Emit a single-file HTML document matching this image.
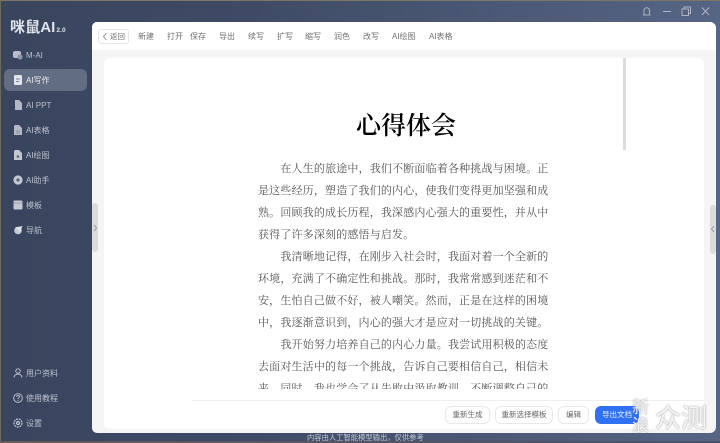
<!DOCTYPE html>
<html lang="zh"><head><meta charset="utf-8"><title>咪鼠AI</title>
<style>
*{margin:0;padding:0;box-sizing:border-box}
html,body{width:720px;height:443px;overflow:hidden;background:#3e4963}
body{position:relative;font-family:"Liberation Sans","Noto Sans CJK SC",sans-serif}
#all{position:absolute;left:0;top:0;width:720px;height:443px;filter:blur(.35px)}
.a{position:absolute;white-space:nowrap}
#bg{left:0;top:0;width:720px;height:443px;background:linear-gradient(90deg,#39445d 0%,#3f4b66 35%,#566584 100%);border-top:1px solid #7d7566;border-left:1px solid #6e675e}
#bot{left:0;top:441px;width:720px;height:2px;background:linear-gradient(90deg,#6b5a55,#5a5560 40%,#4a5268)}
#logo{left:10px;top:18px;font-size:15px;font-weight:bold;color:#dfe3ea;letter-spacing:.1px;line-height:20px}
#logo small{font-size:6.5px;margin-left:1px}
.nav{left:26px;font-size:8px;line-height:12px;color:#bcc2ce}
.ic{position:absolute;left:13px;width:10px;height:10px}
#pill{left:4px;top:69px;width:83px;height:22px;border-radius:6px;background:#626d83}
#panel{left:92px;top:22px;width:624px;height:411px;background:#f5f5f5;border-radius:5px 6px 6px 5px;overflow:hidden}
#tool{left:92px;top:22px;width:624px;height:28px;background:#fff;border-radius:5px 6px 0 0}
.t{top:31px;font-size:8px;line-height:12px;color:#707070}
#back{left:98px;top:29px;width:31px;height:15px;border:1px solid #e4e6ea;border-radius:3px;font-size:7.5px;line-height:14px;color:#707070;padding-left:11px}
#doc{left:104px;top:58px;width:600px;height:371px;background:#fff;border-radius:6px}
#sb{left:623px;top:58px;width:3px;height:92px;background:#dcdcdc}
#title{left:356px;top:108px;font-family:"Noto Serif CJK SC",serif;font-size:25px;line-height:32px;color:#000;font-weight:600}
#clip{left:258px;top:157px;width:300px;height:232px;overflow:hidden;font-family:"Noto Serif CJK SC",serif;font-size:11px;line-height:22px;color:#555;letter-spacing:.17px}
#clip div{white-space:nowrap}
.in{padding-left:22.4px}
#line{left:192px;top:400px;width:512px;height:1px;background:#eeeeee}
.b{top:406px;height:18px;border:1px solid #e9e9ec;border-radius:6px;background:#fff;font-size:7.5px;line-height:16px;color:#666;text-align:center}
#exp{left:595px;top:406px;width:44px;height:18px;border-radius:6px;background:#2f71f2;color:#e8f0ff;font-size:7.5px;line-height:18px;text-align:center}
#foot{left:307px;top:432px;font-size:7.3px;line-height:11px;color:#c4c9d4}
.h{background:#dcdcdc;border-radius:3px}
.wm{color:rgba(255,255,255,.9);font-family:"Noto Sans CJK SC",sans-serif;text-shadow:0 0 1px rgba(90,90,90,.6),0 0 2px rgba(120,120,120,.45)}
</style></head><body><div id="all">
<div class="a" id="bg"></div><div class="a" id="bot"></div>
<div class="a" id="logo">咪鼠AI<small>2.0</small></div>
<div class="a" id="pill"></div>

<svg class="ic" style="top:50px" viewBox="0 0 10 10"><rect x="0" y="1" width="8" height="7" rx="2" fill="#b9bec9"/><circle cx="7" cy="7" r="2.6" fill="#8d94a4"/></svg>
<div class="a nav" style="top:50px">M-AI</div>
<svg class="ic" style="top:75px" viewBox="0 0 10 10"><rect x="1" y="0" width="8" height="10" rx="1.4" fill="#e3e5ea"/><path d="M3 4h4M3 6.5h3" stroke="#7c8599"/></svg>
<div class="a nav" style="top:75px;color:#eceef2">AI写作</div>
<svg class="ic" style="top:100px" viewBox="0 0 10 10"><path d="M2 0h4l3 3v7H2z" fill="#b4b9c5"/></svg>
<div class="a nav" style="top:100px">AI PPT</div>
<svg class="ic" style="top:125px" viewBox="0 0 10 10"><path d="M2 0h4l3 3v7H1V1z" fill="#b4b9c5"/><path d="M3 6h4M3 8h4" stroke="#7c8599" stroke-width=".7"/></svg>
<div class="a nav" style="top:125px">AI表格</div>
<svg class="ic" style="top:150px" viewBox="0 0 10 10"><path d="M2 0h4l3 3v7H1V1z" fill="#c4c8d1"/><circle cx="5" cy="6.5" r="1.3" fill="#5b6479"/></svg>
<div class="a nav" style="top:150px">AI绘图</div>
<svg class="ic" style="top:175px" viewBox="0 0 10 10"><circle cx="5" cy="5" r="4.6" fill="#c4c8d1"/><circle cx="5" cy="5" r="1.6" fill="#5b6479"/></svg>
<div class="a nav" style="top:175px">AI助手</div>
<svg class="ic" style="top:200px" viewBox="0 0 10 10"><rect x=".5" y=".5" width="9" height="9" rx="1" fill="#c4c8d1"/><path d="M.5 3h9" stroke="#7c8599" stroke-width=".6"/></svg>
<div class="a nav" style="top:200px">模板</div>
<svg class="ic" style="top:225px" viewBox="0 0 10 10"><circle cx="5" cy="5.5" r="3.8" fill="#c4c8d1"/><path d="M2 2.5 9.5 1 7 7z" fill="#dfe2e8"/></svg>
<div class="a nav" style="top:225px">导航</div>

<svg class="ic" style="top:368px" viewBox="0 0 10 10" fill="none" stroke="#c4c9d4" stroke-width=".9"><circle cx="5" cy="3" r="2.2"/><path d="M1 9.500c.4-2.600 2-3.400 4-3.400s3.600.8 4 3.400"/></svg>
<div class="a nav" style="top:368px">用户资料</div>
<svg class="ic" style="top:393px" viewBox="0 0 10 10" fill="none" stroke="#c4c9d4" stroke-width=".9"><circle cx="5" cy="5" r="4.3"/><path d="M3.500 3.800c.2-1.600 3-1.600 3 0 0 1-1.500 1.100-1.500 2.400"/><path d="M5 7.200v.8"/></svg>
<div class="a nav" style="top:393px">使用教程</div>
<svg class="ic" style="top:418px" viewBox="0 0 10 10" fill="none" stroke="#c4c9d4" stroke-width="1.200"><circle cx="5" cy="5" r="1.500"/><circle cx="5" cy="5" r="4" stroke-dasharray="2 .8"/></svg>
<div class="a nav" style="top:418px">设置</div>

<svg class="a" style="left:641px;top:5px" width="72" height="13" viewBox="0 0 72 13" fill="none" stroke="#aeb5c4" stroke-width="1"><path d="M2 10h7.500M3 10V5.500a2.700 2.700 0 0 1 5.500 0V10"/><path d="M22 6.500h8"/><rect x="41" y="4" width="6.500" height="6.500"/><path d="M43 4V2h6.500v6.500h-2"/><path d="M61 2.500l7 7.500M68 2.500l-7 7.500"/></svg>

<div class="a" id="panel"></div>
<div class="a" id="tool"></div>
<div class="a" id="back">返回</div>
<svg class="a" style="left:102px;top:32px" width="6" height="9" viewBox="0 0 6 9" fill="none" stroke="#888" stroke-width=".9"><path d="M4.500 1 1.500 4.500l3 3.500"/></svg>
<div class="a t" style="left:138px">新建</div>
<div class="a t" style="left:167px">打开</div>
<div class="a t" style="left:190px">保存</div>
<div class="a t" style="left:219px">导出</div>
<div class="a t" style="left:248px">续写</div>
<div class="a t" style="left:277px">扩写</div>
<div class="a t" style="left:305px">缩写</div>
<div class="a t" style="left:334px">润色</div>
<div class="a t" style="left:363px">改写</div>
<div class="a t" style="left:392px">AI绘图</div>
<div class="a t" style="left:429px">AI表格</div>

<div class="a" id="doc"></div>
<div class="a" id="sb"></div>
<div class="a" id="title">心得体会</div>
<div class="a" id="clip">
<div class="in">在人生的旅途中，我们不断面临着各种挑战与困境。正</div>
<div>是这些经历，塑造了我们的内心，使我们变得更加坚强和成</div>
<div>熟。回顾我的成长历程，我深感内心强大的重要性，并从中</div>
<div>获得了许多深刻的感悟与启发。</div>
<div class="in">我清晰地记得，在刚步入社会时，我面对着一个全新的</div>
<div>环境，充满了不确定性和挑战。那时，我常常感到迷茫和不</div>
<div>安，生怕自己做不好，被人嘲笑。然而，正是在这样的困境</div>
<div>中，我逐渐意识到，内心的强大才是应对一切挑战的关键。</div>
<div class="in">我开始努力培养自己的内心力量。我尝试用积极的态度</div>
<div>去面对生活中的每一个挑战，告诉自己要相信自己，相信未</div>
<div>来。同时，我也学会了从失败中汲取教训，不断调整自己的</div>
</div>
<div class="a" id="line"></div>
<div class="a b" style="left:445px;width:45px">重新生成</div>
<div class="a b" style="left:495px;width:58px">重新选择模板</div>
<div class="a b" style="left:558px;width:31px">编辑</div>
<div class="a" id="exp">导出文档</div>
<div class="a" id="foot">内容由人工智能模型输出，仅供参考</div>

<div class="a h" style="left:92px;top:203px;width:6px;height:49px"></div>
<svg class="a" style="left:93px;top:224px" width="5" height="8" viewBox="0 0 5 8" fill="none" stroke="#8a8f99" stroke-width=".9"><path d="M1 1l2.500 3L1 7"/></svg>
<div class="a h" style="left:710px;top:205px;width:6px;height:49px"></div>
<svg class="a" style="left:710px;top:225px" width="5" height="8" viewBox="0 0 5 8" fill="none" stroke="#8a8f99" stroke-width=".9"><path d="M4 1 1.500 4 4 7"/></svg>

<div class="a wm" style="left:632px;top:397px;font-size:17px;line-height:18px">新<br>浪</div>
<div class="a wm" style="left:655px;top:402px;font-size:26px;line-height:30px">众测</div>
</div></body></html>
